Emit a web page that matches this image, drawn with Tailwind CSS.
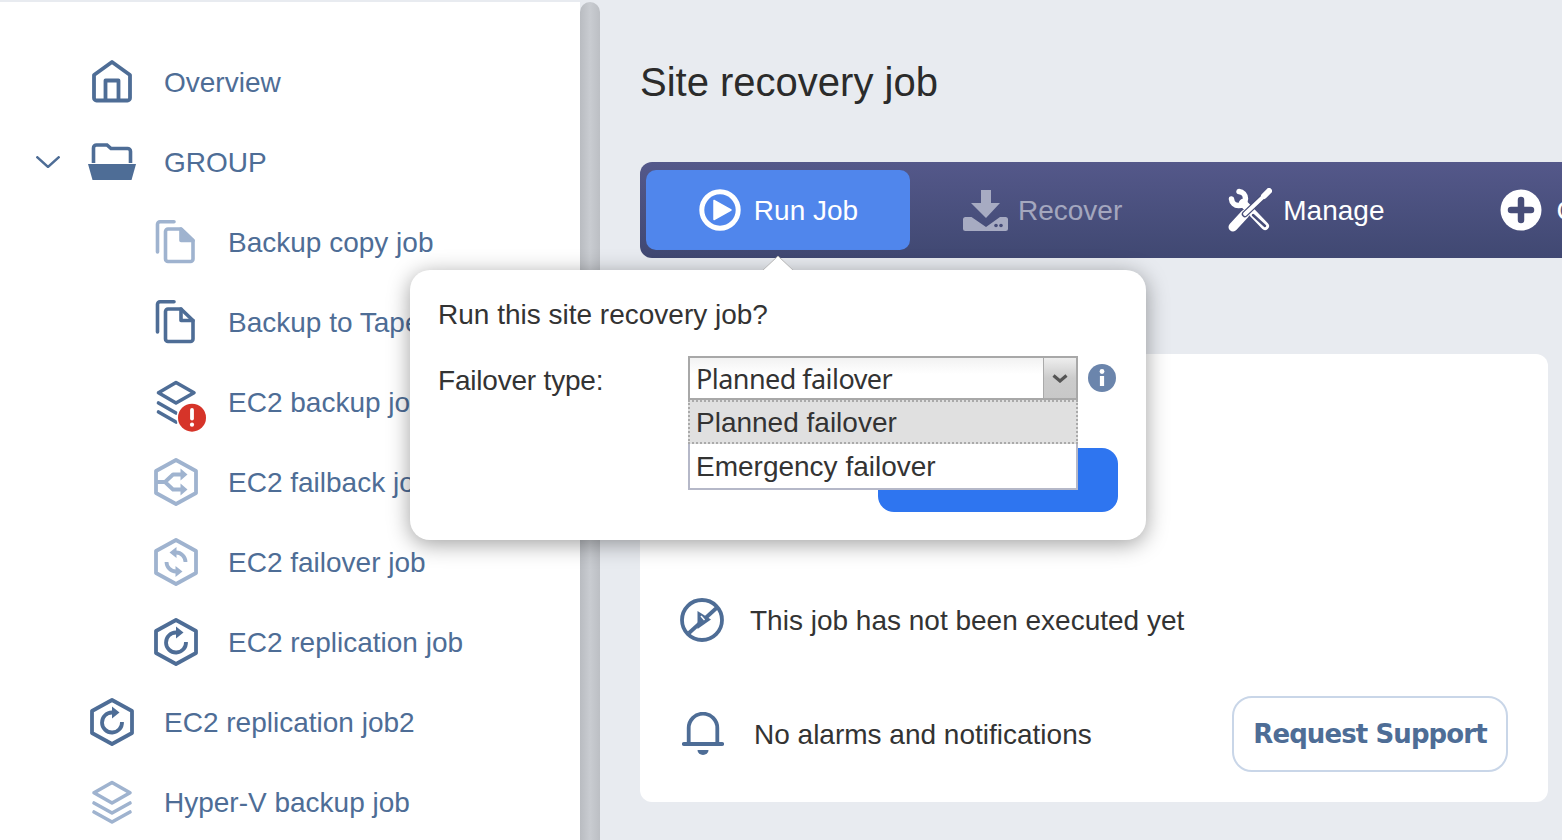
<!DOCTYPE html>
<html lang="en">

<head>
    <meta charset="UTF-8" />
    <title>Site recovery job</title>
    <script src="https://cdn.jsdelivr.net/npm/@tailwindcss/browser@4"></script>
</head>

<body class="h-[840px] w-[1562px] overflow-hidden bg-[#e8ebf0] font-['Liberation_Sans',sans-serif] text-[28px] text-[#333]">
    <div class="flex h-[840px] relative">
        <!-- Sidebar -->
        <aside class="w-[580px] h-full bg-white border-t-2 border-[#e8ebf0] pt-[40px] text-[#4e6d96] shrink-0 overflow-hidden">
            <div class="h-[80px] flex items-center pl-[88px] gap-[28px]">
                <svg class="w-[48px] h-[48px] shrink-0" viewBox="0 0 48 48" fill="none" stroke="#4e6d96" stroke-width="3.8" stroke-linejoin="round">
                    <path d="M24 4 L42 17 V40 a2.5 2.5 0 0 1 -2.5 2.5 H8.5 a2.5 2.5 0 0 1 -2.5 -2.5 V17 Z" />
                    <path d="M17.5 42.5 V22.5 H30.5 V42.5" />
                </svg>
                <span class="mt-[2px]">Overview</span>
            </div>
            <div class="h-[80px] flex items-center pl-[36px]">
                <svg class="w-[24px] h-[12px] shrink-0 mr-[28px]" viewBox="0 0 24 12" fill="none" stroke="#4e6d96" stroke-width="2.4">
                    <path d="M0.5 0.5 L12 11 L23.5 0.5" />
                </svg>
                <svg class="w-[48px] h-[48px] shrink-0 mr-[28px]" viewBox="0 0 48 48" fill="none" stroke="#4e6d96" stroke-width="3.6">
                    <path d="M5.5 25 V10 a3 3 0 0 1 3 -3 H19 L23 10.5 H39.5 a3 3 0 0 1 3 3 V25" />
                    <path d="M0 26 H48 L43.5 42 H4.5 Z" fill="#4e6d96" stroke="none" />
                </svg>
                <span class="mt-[2px]">GROUP</span>
            </div>
            <div class="h-[80px] flex items-center pl-[152px] gap-[28px]">
                <svg class="w-[48px] h-[48px] shrink-0" viewBox="0 0 48 48" fill="none" stroke="#9fb3cf" stroke-width="3.6" stroke-linejoin="round" stroke-linecap="round">
                    <path d="M22 3.7 H8 a2.5 2.5 0 0 0 -2.5 2.5 V34" />
                    <path d="M16 11 H29 L41 22.5 V41 a2.5 2.5 0 0 1 -2.5 2.5 H16 a2.5 2.5 0 0 1 -2.5 -2.5 V13.5 a2.5 2.5 0 0 1 2.5 -2.5 Z" />
                    <path d="M29 11 L41 22.5 H29 Z" fill="#9fb3cf" />
                </svg>
                <span class="mt-[2px]">Backup copy job</span>
            </div>
            <div class="h-[80px] flex items-center pl-[152px] gap-[28px]">
                <svg class="w-[48px] h-[48px] shrink-0" viewBox="0 0 48 48" fill="none" stroke="#4e6d96" stroke-width="3.6" stroke-linejoin="round" stroke-linecap="round">
                    <path d="M22 3.7 H8 a2.5 2.5 0 0 0 -2.5 2.5 V34" />
                    <path d="M16 11 H29 L41 22.5 V41 a2.5 2.5 0 0 1 -2.5 2.5 H16 a2.5 2.5 0 0 1 -2.5 -2.5 V13.5 a2.5 2.5 0 0 1 2.5 -2.5 Z" />
                    <path d="M29 11 V22.5 H41" />
                </svg>
                <span class="mt-[2px]">Backup to Tape</span>
            </div>
            <div class="h-[80px] flex items-center pl-[152px] gap-[28px]">
                <svg class="w-[48px] h-[48px] shrink-0 overflow-visible" viewBox="0 0 48 48" fill="none" stroke="#4e6d96" stroke-width="3.6" stroke-linejoin="round" stroke-linecap="round">
                    <path d="M24 4.5 L42 14.7 L24 25 L6.5 14.7 Z" />
                    <path d="M6.5 25 L24 35" />
                    <path d="M6.5 34 L24 44" />
                    <circle cx="40" cy="39.7" r="15.5" fill="white" stroke="none" />
                    <circle cx="40" cy="39.7" r="14" fill="#d63429" stroke="none" />
                    <path d="M40 32 V40.5" stroke="white" stroke-width="3.8" />
                    <circle cx="40" cy="46.7" r="2.1" fill="white" stroke="none" />
                </svg>
                <span class="mt-[2px]">EC2 backup job</span>
            </div>
            <div class="h-[80px] flex items-center pl-[152px] gap-[28px]">
                <svg class="w-[48px] h-[48px] shrink-0" viewBox="0 0 48 48" fill="none" stroke="#9fb3cf" stroke-width="3.8" stroke-linejoin="round">
                    <path d="M24 2 L44 13 V35 L24 46 L4 35 V13 Z" />
                    <path d="M4 24 H13 L21 16.5 H30 M13 24 L21 31.5 H30" />
                    <path d="M28.5 10.5 L35.5 16.5 L28.5 22.5 Z M28.5 25.5 L35.5 31.5 L28.5 37.5 Z" fill="#9fb3cf" stroke="none" />
                </svg>
                <span class="mt-[2px]">EC2 failback job</span>
            </div>
            <div class="h-[80px] flex items-center pl-[152px] gap-[28px]">
                <svg class="w-[48px] h-[48px] shrink-0" viewBox="0 0 48 48" fill="none" stroke="#9fb3cf" stroke-width="3.8" stroke-linejoin="round">
                    <path d="M24 2 L44 13 V35 L24 46 L4 35 V13 Z" />
                    <path d="M33.5 24 A9.5 9.5 0 0 0 24 14.5 M14.5 24 A9.5 9.5 0 0 0 24 33.5" />
                    <path d="M24.5 9 L17.5 14.5 L24.5 20 Z M23.5 28 L30.5 33.5 L23.5 39 Z" fill="#9fb3cf" stroke="none" />
                </svg>
                <span class="mt-[2px]">EC2 failover job</span>
            </div>
            <div class="h-[80px] flex items-center pl-[152px] gap-[28px]">
                <svg class="w-[48px] h-[48px] shrink-0" viewBox="0 0 48 48" fill="none" stroke="#4e6d96" stroke-width="3.8" stroke-linejoin="round">
                    <path d="M24 2 L44 13 V35 L24 46 L4 35 V13 Z" />
                    <path d="M34 24 A10 10 0 1 1 24 14.5" />
                    <path d="M24 8.5 L31.5 14.5 L24 20.5 Z" fill="#4e6d96" stroke="none" />
                </svg>
                <span class="mt-[2px]">EC2 replication job</span>
            </div>
            <div class="h-[80px] flex items-center pl-[88px] gap-[28px]">
                <svg class="w-[48px] h-[48px] shrink-0" viewBox="0 0 48 48" fill="none" stroke="#4e6d96" stroke-width="3.8" stroke-linejoin="round">
                    <path d="M24 2 L44 13 V35 L24 46 L4 35 V13 Z" />
                    <path d="M34 24 A10 10 0 1 1 24 14.5" />
                    <path d="M24 8.5 L31.5 14.5 L24 20.5 Z" fill="#4e6d96" stroke="none" />
                </svg>
                <span class="mt-[2px]">EC2 replication job2</span>
            </div>
            <div class="h-[80px] flex items-center pl-[88px] gap-[28px]">
                <svg class="w-[48px] h-[48px] shrink-0" viewBox="0 0 48 48" fill="none" stroke="#9fb3cf" stroke-width="3.6" stroke-linejoin="round" stroke-linecap="round">
                    <path d="M24 4.5 L42 14.7 L24 25 L6 14.7 Z" />
                    <path d="M6 25 L24 35 L42 25" />
                    <path d="M6 34 L24 44 L42 34" />
                </svg>
                <span class="mt-[2px]">Hyper-V backup job</span>
            </div>
        </aside>

        <!-- Scrollbar -->
        <div class="w-[20px] h-[838px] mt-[2px] rounded-t-[10px] bg-gradient-to-r from-[#b9bcc1] via-[#c9ccd1] to-[#bcbfc4] shrink-0"></div>

        <!-- Main -->
        <main class="flex-1 min-w-0 pl-[40px]">
            <h1 class="h-[162px] pt-[57px] text-[40px] leading-[50px] text-[#2b2b2b] font-normal">Site recovery job</h1>

            <div class="h-[96px] w-[922px] rounded-l-[12px] bg-gradient-to-b from-[#54588a] to-[#404872] flex items-center pl-[6px] overflow-hidden text-white whitespace-nowrap">
                <div class="w-[264px] h-[80px] rounded-[10px] bg-[#5086ec] flex items-center justify-center gap-[13px] pl-[1px] shrink-0">
                    <svg class="w-[42px] h-[42px]" viewBox="0 0 42 42" fill="none">
                        <circle cx="21" cy="21" r="18.2" stroke="white" stroke-width="5" />
                        <path d="M15 11.5 L32 21 L15 30.5 Z" fill="white" stroke="white" stroke-width="1.5" stroke-linejoin="round" />
                    </svg>
                    <span class="mt-[2px]">Run Job</span>
                </div>
                <div class="flex items-center gap-[10px] pl-[53px] pr-[53px] shrink-0 text-white/50">
                    <svg class="w-[45px] h-[41px] shrink-0" viewBox="0 0 45 41">
                        <path d="M18 0 H28 V13 H37 L23 28 L8 13 H18 Z M2.5 27 H8.5 L23 37 L37 27 H42.5 a2.5 2.5 0 0 1 2.5 2.5 V38.5 a2.5 2.5 0 0 1 -2.5 2.5 H2.5 a2.5 2.5 0 0 1 -2.5 -2.5 V29.5 a2.5 2.5 0 0 1 2.5 -2.5 Z" fill="#a7abc2" />
                        <circle cx="33" cy="35.5" r="1.8" fill="#474d78" />
                        <circle cx="38" cy="35.5" r="1.8" fill="#474d78" />
                    </svg>
                    <span class="mt-[2px]">Recover</span>
                </div>
                <div class="flex items-center gap-[11px] pl-[53px] pr-[116px] shrink-0">
                    <svg class="w-[44px] h-[44px] shrink-0" viewBox="0 0 44 44" fill="none" stroke="white" stroke-linecap="round">
                        <path d="M11 3.5 A7 7 0 1 1 3.5 11" stroke-width="5.5" />
                        <path d="M15 15 L37 38" stroke-width="8" />
                        <path d="M25 27 L37 38" stroke="#474d78" stroke-width="2.5" />
                        <path d="M5 39 L17 26" stroke-width="9" />
                        <path d="M17 26 L36 8" stroke="#474d78" stroke-width="6.5" />
                        <path d="M17 26 L36 8" stroke-width="3.8" />
                        <path d="M36 8 L41 3" stroke-width="6" />
                    </svg>
                    <span class="mt-[2px]">Manage</span>
                </div>
                <div class="flex items-center gap-[14px] shrink-0">
                    <svg class="w-[42px] h-[42px] shrink-0" viewBox="0 0 42 42">
                        <circle cx="21" cy="21" r="20.5" fill="white" />
                        <path d="M21 11 V31 M11 21 H31" stroke="#474d78" stroke-width="6.5" stroke-linecap="round" />
                    </svg>
                    <span class="mt-[2px]">Copy</span>
                </div>
            </div>

            <div class="h-[448px] w-[908px] mt-[96px] rounded-[12px] bg-white flex flex-col justify-end pb-[30px] pl-[40px] pr-[40px]">
                <div class="flex items-center gap-[26px] h-[44px] mb-[54px]">
                    <svg class="w-[44px] h-[44px] shrink-0" viewBox="0 0 44 44" fill="none" stroke="#4e6d96" stroke-width="3.8">
                        <circle cx="22" cy="22" r="20" />
                        <path d="M9 35 L36.5 10" />
                        <path d="M17.5 13 L31 21.5 L17.5 31 Z" fill="#4e6d96" stroke="none" />
                        <path d="M21 18 L24.5 22" stroke="white" stroke-width="1.5" />
                    </svg>
                    <span class="mt-[2px]">This job has not been executed yet</span>
                </div>
                <div class="flex items-center justify-between h-[76px]">
                    <div class="flex items-center gap-[30px] pl-[2px]">
                        <svg class="w-[42px] h-[44px] shrink-0" viewBox="0 0 42 44" fill="none" stroke="#4e6d96" stroke-width="3.8" stroke-linecap="round">
                            <path d="M6.7 31 V16 A14.3 14.3 0 0 1 35.3 16 V31" />
                            <path d="M2 32 H40" stroke-width="4.2" />
                            <path d="M15.5 38 H26.5 a5.5 5 0 0 1 -11 0 Z" fill="#4e6d96" stroke="none" />
                        </svg>
                        <span class="mt-[2px]">No alarms and notifications</span>
                    </div>
                    <button class="w-[276px] h-[76px] rounded-[20px] border-2 border-[#c9d6e8] bg-white font-['DejaVu_Sans',sans-serif] font-bold text-[26px] tracking-[-0.9px] text-[#4e6d96]">Request Support</button>
                </div>
            </div>
        </main>

        <!-- Run job popover -->
        <div class="absolute left-[410px] top-[270px] w-[736px] h-[270px] rounded-[20px] bg-white shadow-[0_4px_22px_rgba(0,0,0,0.38)] pl-[28px] pr-[28px] pt-[29px]">
            <svg class="absolute left-[351px] top-[-15px] w-[34px] h-[16px]" viewBox="0 0 34 16">
                <path d="M1 16 L17 1 L33 16 Z" fill="white" stroke="#b5b5b5" stroke-width="1" />
                <path d="M1 16 H33" stroke="white" stroke-width="2" />
            </svg>
            <p class="leading-[32px]">Run this site recovery job?</p>
            <div class="flex mt-[25px]">
                <span class="w-[250px] leading-[32px] pt-[9px] tracking-[-0.2px] shrink-0">Failover type:</span>
                <div class="relative w-[390px] shrink-0">
                    <div class="h-[44px] border-2 border-[#a8a8a8] bg-gradient-to-b from-[#f2f2f2] to-white to-40% flex items-center pl-[6px] pt-[3px] font-['Noto_Sans',sans-serif] text-[27px] tracking-[-0.55px]">
                        Planned failover
                        <span class="absolute right-[2px] top-[2px] w-[33px] h-[40px] border-l border-[#aaa] bg-gradient-to-b from-[#eeeeee] via-[#cccccc] to-[#c8c8c8] flex items-center justify-center">
                            <svg class="w-[16px] h-[9px]" viewBox="0 0 16 9" fill="none" stroke="#555" stroke-width="3.2"><path d="M1.5 1.5 L8 7 L14.5 1.5" /></svg>
                        </span>
                    </div>
                    <div class="absolute left-0 top-[44px] w-[390px] h-[90px] z-10 border-2 border-t-0 border-[#b5b8c8] bg-white">
                        <div class="h-[44px] bg-[#e0e0e0] border-2 border-dotted border-[#aaa] flex items-center pt-[2px] -mx-[2px] pl-[6px]">Planned failover</div>
                        <div class="h-[44px] flex items-center pt-[2px] pl-[6px]">Emergency failover</div>
                    </div>
                </div>
                <svg class="w-[28px] h-[28px] ml-[10px] mt-[8px] shrink-0" viewBox="0 0 28 28">
                    <circle cx="14" cy="14" r="14" fill="#6b85ac" />
                    <circle cx="14" cy="7.5" r="2.4" fill="white" />
                    <path d="M14 12 V22" stroke="white" stroke-width="4.2" />
                </svg>
            </div>
            <div class="absolute left-[468px] top-[178px] w-[240px] h-[64px] rounded-[16px] bg-[#2e75f0]"></div>
        </div>
    </div>
</body>

</html>
